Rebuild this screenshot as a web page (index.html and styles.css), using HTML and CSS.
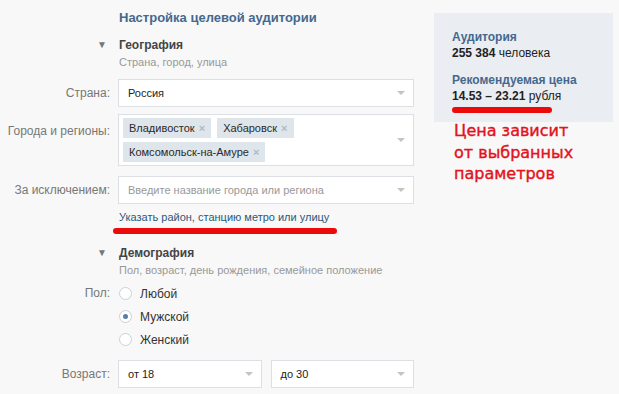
FILE: index.html
```html
<!DOCTYPE html>
<html lang="ru">
<head>
    <meta charset="UTF-8">
    <meta name="viewport" content="width=device-width, initial-scale=1.0">
    <title>Настройка целевой аудитории</title>
    <link rel="stylesheet" href="styles.css">
</head>
<body>
    <div class="page">
        <div class="form">
            <div class="row title-row">
                <span></span>
                <div class="title">Настройка целевой аудитории</div>
            </div>

            <div class="row head-row">
                <span class="caret">▼</span>
                <div class="section-head">География</div>
            </div>
            <div class="row sub-row">
                <span></span>
                <div class="section-sub">Страна, город, улица</div>
            </div>

            <div class="row field-row country">
                <label>Страна:</label>
                <div class="select">
                    <span class="value">Россия</span>
                    <span class="arrow"></span>
                </div>
            </div>

            <div class="row field-row cities">
                <label>Города и регионы:</label>
                <div class="select tokens">
                    <div class="token-list">
                        <span class="token">Владивосток <i>×</i></span>
                        <span class="token">Хабаровск <i>×</i></span>
                        <span class="token">Комсомольск-на-Амуре <i>×</i></span>
                    </div>
                    <span class="arrow"></span>
                </div>
            </div>

            <div class="row field-row exclude">
                <label>За исключением:</label>
                <div class="select">
                    <span class="placeholder">Введите название города или региона</span>
                    <span class="arrow"></span>
                </div>
            </div>

            <div class="row link-row">
                <span></span>
                <div class="link-wrap">
                    <a class="link" href="#">Указать район, станцию метро или улицу</a>
                    <div class="marker link-marker"></div>
                </div>
            </div>

            <div class="row head-row demo">
                <span class="caret">▼</span>
                <div class="section-head">Демография</div>
            </div>
            <div class="row sub-row">
                <span></span>
                <div class="section-sub">Пол, возраст, день рождения, семейное положение</div>
            </div>

            <div class="row radio-row">
                <label>Пол:</label>
                <div class="radios">
                    <div class="radio"><span class="dot"></span>Любой</div>
                    <div class="radio checked"><span class="dot"></span>Мужской</div>
                    <div class="radio"><span class="dot"></span>Женский</div>
                </div>
            </div>

            <div class="row field-row age">
                <label>Возраст:</label>
                <div class="age-pair">
                    <div class="select">
                        <span class="value">от 18</span>
                        <span class="arrow"></span>
                    </div>
                    <div class="select">
                        <span class="value">до 30</span>
                        <span class="arrow"></span>
                    </div>
                </div>
            </div>
        </div>

        <div class="side">
            <div class="panel">
                <div class="panel-title">Аудитория</div>
                <div class="panel-value"><b>255 384</b> человека</div>
                <div class="panel-title price">Рекомендуемая цена</div>
                <div class="panel-value"><b>14.53 – 23.21</b> рубля</div>
                <div class="marker price-marker"></div>
            </div>
            <div class="note">Цена зависит<br>от выбранных<br>параметров</div>
        </div>
    </div>
</body>
</html>
```

FILE: styles.css
```css
* {
    margin: 0;
    padding: 0;
    box-sizing: border-box;
}

body {
    background: #f8f8f8;
    font-family: 'Liberation Sans', Arial, sans-serif;
    font-size: 12px;
    color: #222;
}

.page {
    display: flex;
    gap: 20px;
    width: 619px;
    height: 394px;
    overflow: hidden;
}

.form {
    width: 414px;
    display: flex;
    flex-direction: column;
}

.row {
    display: grid;
    grid-template-columns: 110px 296px;
    column-gap: 8px;
}

.row label {
    color: #777;
    text-align: right;
    line-height: 28px;
}

/* headings */
.title-row {
    margin-top: 10px;
}

.title {
    padding-left: 1px;
    color: #45688e;
    font-weight: bold;
    font-size: 13px;
    line-height: 16px;
}

.head-row {
    margin-top: 11px;
}

.caret {
    text-align: right;
    padding-right: 3px;
    font-size: 10px;
    line-height: 16px;
    color: #777;
}

.section-head {
    padding-left: 1px;
    font-weight: bold;
    font-size: 12px;
    line-height: 16px;
    color: #444;
}

.sub-row {
    margin-top: 2px;
}

.section-sub {
    padding-left: 1px;
    color: #999;
    font-size: 11px;
    line-height: 14px;
}

/* selects */
.select {
    position: relative;
    display: flex;
    align-items: center;
    height: 28px;
    padding: 0 24px 0 9px;
    background: #fff;
    border: 1px solid #dcdfe3;
    font-size: 11px;
}

.arrow {
    position: absolute;
    right: 8px;
    top: 50%;
    margin-top: -2px;
    border-left: 4px solid transparent;
    border-right: 4px solid transparent;
    border-top: 4px solid #c4c4c4;
}

.placeholder {
    color: #999;
}

.country {
    margin-top: 10px;
}

.cities {
    margin-top: 7px;
}

.cities label {
    line-height: 34px;
}

.select.tokens {
    height: 52px;
    padding: 3px 24px 3px 4px;
    align-items: flex-start;
}

.token-list {
    display: flex;
    flex-wrap: wrap;
    gap: 4px 6px;
}

.token {
    display: inline-block;
    height: 20px;
    line-height: 20px;
    padding: 0 6px 0 6px;
    background: #dee5eb;
    color: #2a2a2a;
    font-size: 11px;
}

.token i {
    font-style: normal;
    font-weight: bold;
    color: #b0bac4;
    margin-left: 1px;
}

.exclude {
    margin-top: 10px;
}

/* link with red marker */
.link-row {
    margin-top: 5px;
}

.link-wrap {
    display: flex;
    flex-direction: column;
}

.link {
    padding-left: 1px;
    color: #2b587a;
    text-decoration: none;
    font-size: 11px;
    line-height: 16px;
}

.marker {
    height: 6px;
    border-radius: 3px;
    background: #ec0b0b;
}

.link-marker {
    width: 224px;
    margin: 3px 0 0 -5px;
}

/* radios */
.radio-row {
    margin-top: 5px;
}

.radio-row label {
    line-height: 23px;
}

.radios {
    display: flex;
    flex-direction: column;
}

.radio {
    display: flex;
    align-items: center;
    gap: 8px;
    height: 23px;
    padding-left: 1px;
    color: #333;
}

.dot {
    position: relative;
    width: 13px;
    height: 13px;
    border-radius: 50%;
    border: 1px solid #c9d1da;
    background: #fff;
}

.radio.checked .dot::after {
    content: '';
    position: absolute;
    left: 3px;
    top: 3px;
    width: 5px;
    height: 5px;
    border-radius: 50%;
    background: #5b7ea4;
}

.age {
    margin-top: 9px;
}

.age-pair {
    display: flex;
    gap: 9px;
}

.age-pair .select {
    flex: 1;
}

/* right side */
.side {
    width: 179px;
    padding-top: 13px;
}

.panel {
    height: 109px;
    padding: 16px 0 0 18px;
    background: #eaeef2;
}

.panel-title {
    color: #45688e;
    font-weight: bold;
    line-height: 16px;
}

.panel-title.price {
    margin-top: 11px;
}

.panel-value {
    line-height: 16px;
    color: #222;
}

.price-marker {
    width: 100px;
    margin-top: 3px;
}

.note {
    margin-top: -2px;
    padding-left: 20px;
    font-family: 'DejaVu Sans', sans-serif;
    font-size: 16px;
    line-height: 21.5px;
    color: #e3121b;
    -webkit-text-stroke: 0.4px #e3121b;
}
```
